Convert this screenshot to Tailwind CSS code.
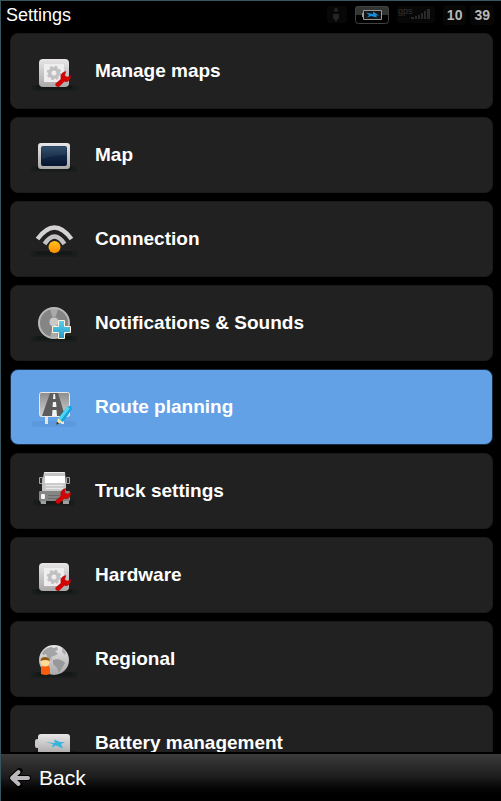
<!DOCTYPE html>
<html lang="en">
	<head>
		<meta charset="UTF-8" />
		<meta name="viewport" content="width=device-width, initial-scale=1.0" />
		<script src="https://cdn.jsdelivr.net/npm/@tailwindcss/browser@4"></script>
		<title>Settings</title>
	</head>
	<body class="bg-black">
		<!-- shared gradients and icon parts -->
		<svg class="absolute w-0 h-0" aria-hidden="true">
			<defs>
				<linearGradient id="silver" x1="0" y1="0" x2="0" y2="1"><stop offset="0" stop-color="#e8e6e6" /><stop offset="1" stop-color="#aaa8a8" /></linearGradient>
				<linearGradient id="navy" x1="0" y1="0" x2="0" y2="1"><stop offset="0" stop-color="#294766" /><stop offset=".45" stop-color="#132a47" /><stop offset="1" stop-color="#061530" /></linearGradient>
				<linearGradient id="orange" x1="0" y1="0" x2="0" y2="1"><stop offset="0" stop-color="#ffc31c" /><stop offset="1" stop-color="#ff8c00" /></linearGradient>
				<linearGradient id="cyan" x1="0" y1="0" x2="0" y2="1"><stop offset="0" stop-color="#5fd0ee" /><stop offset="1" stop-color="#2399c4" /></linearGradient>
				<linearGradient id="sign" x1="0" y1="0" x2="0" y2="1"><stop offset="0" stop-color="#8d8d8d" /><stop offset="1" stop-color="#d2d2d2" /></linearGradient>
				<symbol id="shadow" viewBox="0 0 46 8"><rect x="0" y="1" width="46" height="6" rx="3" fill="#191d1b" /><rect x="5" y="1" width="36" height="4" rx="2" fill="#141816" /></symbol>
				<symbol id="wrench" viewBox="0 0 16 16">
					<path d="M.8 12.600 6 8C5 4 7 1 11 .6L9.600 4.200l2.400 2L15.600 4.600c.5 4-2.600 6.800-6.400 6L4.200 15.400c-2 1.200-4.400-.8-3.400-2.800z" fill="#d40404" stroke="#9a0202" stroke-width=".4" />
				</symbol>
				<symbol id="plate" viewBox="0 0 70 76">
					<use href="#shadow" x="11" y="51" width="46" height="8" />
					<rect x="19" y="26" width="30" height="28" rx="4" fill="url(#silver)" />
					<rect x="24" y="31" width="20" height="18" fill="#eeeeef" />
					<circle cx="34" cy="40" r="4.2" fill="none" stroke="#c1c1c3" stroke-width="3.4" />
					<circle cx="34" cy="40" r="6.2" fill="none" stroke="#c1c1c3" stroke-width="2" stroke-dasharray="2.6 2.27" />
					<use href="#wrench" x="35" y="38" width="16" height="16" />
				</symbol>
			</defs>
		</svg>

		<div class="h-screen flex flex-col overflow-hidden border-t border-l border-[#39555d] font-['Liberation_Sans',Arial,sans-serif] text-white">
			<header class="h-8 shrink-0 flex items-center justify-between pl-[5px] pr-[7px] pb-1">
				<h1 class="text-[18px] leading-7">Settings</h1>
				<div class="flex items-center gap-2 text-sm font-bold text-[#b8b8b8]">
					<svg class="w-5 h-5" viewBox="0 0 20 20" aria-label="Person">
						<rect x="0" y="1" width="20" height="17" rx="3" fill="#070707" />
						<circle cx="9" cy="5" r="2" fill="#242424" /><path d="M6 9h6v4l-3 4-3-4z" fill="#242424" />
					</svg>
					<svg class="w-[34px] h-5" viewBox="0 0 34 20" aria-label="Charging">
						<path d="M0 10V4q0-3 3-3h28q3 0 3 3v6z" fill="#343634" />
						<rect x=".5" y="1.5" width="33" height="17" rx="3" fill="none" stroke="#40423f" />
						<path d="M8.5 5.5h18v9h-18zM7.5 8v4" fill="#151515" stroke="#999" />
						<path d="M11 7.500l7 1.500V6.500l6 4h-3l1 2-6-1.500-4 1.500 2-2.500z" fill="#168bdc" />
					</svg>
					<svg class="w-[38px] h-5" viewBox="0 0 38 20" aria-label="GPS signal">
						<rect x="0" y="1" width="38" height="17" rx="3" fill="#070707" />
						<text x="1" y="9" font-size="9" font-weight="400" fill="#333">gps</text>
						<path d="M14 12h3v2h-3zM18 11h2v3h-2zM21 10h2v4h-2zM24 8h2v6h-2zM27 6h2v8h-2zM30 4h3v10h-3z" fill="#292929" />
					</svg>
					<time class="flex gap-1"><span class="px-1 rounded bg-[#070707]">10</span><span class="px-1 rounded bg-[#070707]">39</span></time>
				</div>
			</header>

			<main class="flex-1 min-h-0 overflow-hidden pl-[9px] pr-2">
				<ul class="flex flex-col gap-2">
					<li>
						<button class="w-full h-[76px] flex items-center gap-[5px] pl-[9px] rounded-lg border border-[#1b1b1b] bg-[#212121] text-left text-[19px] font-bold">
							<svg class="w-[70px] h-[76px] shrink-0" viewBox="0 0 70 76"><use href="#plate" width="70" height="76" /></svg>
							<span>Manage maps</span>
						</button>
					</li>
					<li>
						<button class="w-full h-[76px] flex items-center gap-[5px] pl-[9px] rounded-lg border border-[#1b1b1b] bg-[#212121] text-left text-[19px] font-bold">
							<svg class="w-[70px] h-[76px] shrink-0" viewBox="0 0 70 76">
								<use href="#shadow" x="11" y="48" width="46" height="8" />
								<rect x="18" y="26" width="32" height="26" rx="3" fill="url(#silver)" />
								<rect x="21" y="29" width="26" height="20" rx="2" fill="url(#navy)" />
								<path d="M22 30h24v8q-12 0-24 4z" fill="#fff" opacity=".06" />
							</svg>
							<span>Map</span>
						</button>
					</li>
					<li>
						<button class="w-full h-[76px] flex items-center gap-[5px] pl-[9px] rounded-lg border border-[#1b1b1b] bg-[#212121] text-left text-[19px] font-bold">
							<svg class="w-[70px] h-[76px] shrink-0" viewBox="0 0 70 76">
								<use href="#shadow" x="11" y="49" width="46" height="8" />
								<path d="M17.500 38Q34.500 15 51.500 38" fill="none" stroke="#d4d2d3" stroke-width="4.500" />
								<path d="M24.500 43Q34.500 28 44.500 43" fill="none" stroke="#c4c2c3" stroke-width="4.500" />
								<circle cx="34.5" cy="46" r="6" fill="url(#orange)" stroke="#212121" stroke-width="2" paint-order="stroke" />
							</svg>
							<span>Connection</span>
						</button>
					</li>
					<li>
						<button class="w-full h-[76px] flex items-center gap-[5px] pl-[9px] rounded-lg border border-[#1b1b1b] bg-[#212121] text-left text-[19px] font-bold">
							<svg class="w-[70px] h-[76px] shrink-0" viewBox="0 0 70 76">
								<use href="#shadow" x="11" y="50" width="46" height="8" />
								<circle cx="34" cy="38" r="15" fill="#858585" stroke="#b9b9b9" stroke-width="2" />
								<path d="M34 38 30 24h8zM34 38l-4 14h8z" fill="#aaa" />
								<circle cx="34" cy="37" r="5" fill="#c9c9c9" stroke="#8a8a8a" />
								<path d="M38.500 35.500h6v6h6v6h-6v6h-6v-6h-6v-6h6z" fill="url(#cyan)" stroke="#fff4dc" />
							</svg>
							<span>Notifications &amp; Sounds</span>
						</button>
					</li>
					<li>
						<button aria-current="true" class="w-full h-[76px] flex items-center gap-[5px] pl-[9px] rounded-lg border border-[#182c43] bg-[#63a1e7] text-left text-[19px] font-bold">
							<svg class="w-[70px] h-[76px] shrink-0" viewBox="0 0 70 76">
								<rect x="12" y="52" width="44" height="6" rx="3" fill="#5b98dc" />
								<path d="M25 46h3v9h-3zM41 46h3v9h-3z" fill="#e4e4e4" />
								<rect x="19.500" y="23.500" width="30" height="24" rx="2" fill="url(#sign)" stroke="#e8e8e8" />
								<path d="M30 24h8l7 23H22z" fill="#5c5c5c" />
								<path d="M33.500 25h1.500l.5 5h-2.500zM33 33h3l.5 5h-4zM32.500 41h4l.5 6h-5z" fill="#f4f4f4" />
								<path d="m38 50 9-12 4-1.500 1 3.500-9 13z" fill="#12a5dd" /><path d="m39.500 50.500 9-12" stroke="#4fd2f5" stroke-width="3" />
								<path d="m38 49-1.500 6.500 6-2.500z" fill="#f8e3a4" /><path d="m37 52.500-.8 3.300 3-1z" fill="#333" />
							</svg>
							<span>Route planning</span>
						</button>
					</li>
					<li>
						<button class="w-full h-[76px] flex items-center gap-[5px] pl-[9px] rounded-lg border border-[#1b1b1b] bg-[#212121] text-left text-[19px] font-bold">
							<svg class="w-[70px] h-[76px] shrink-0" viewBox="0 0 70 76">
								<use href="#shadow" x="13" y="46" width="42" height="8" />
								<path d="M20 47h6v4h-5zM43 47h6v4h-6z" fill="#a0a0a0" />
								<path d="M19.500 24.500h3v6h-3zM46.500 24.500h3v6h-3z" fill="#333" stroke="#a5a5a5" />
								<path d="M24 19h21l1 12v9H22v-9z" fill="#c4c4c4" />
								<path d="M24.500 19.500h20" stroke="#eee" />
								<path d="M25 23h20v7H25z" fill="#fff" />
								<path d="M25 30h19v9H25z" fill="#ccc" /><path d="M26 32.500h17M26 35.500h17" stroke="#e8e8e8" />
								<rect x="19" y="38" width="31" height="10" rx="1" fill="#858585" />
								<rect x="21" y="41" width="4" height="5" rx="1" fill="#f6f6f6" />
								<path d="M28 42.500h12M28 45.500h10" stroke="#6c6c6c" />
								<use href="#wrench" x="35" y="35" width="16" height="16" />
							</svg>
							<span>Truck settings</span>
						</button>
					</li>
					<li>
						<button class="w-full h-[76px] flex items-center gap-[5px] pl-[9px] rounded-lg border border-[#1b1b1b] bg-[#212121] text-left text-[19px] font-bold">
							<svg class="w-[70px] h-[76px] shrink-0" viewBox="0 0 70 76"><use href="#plate" width="70" height="76" /></svg>
							<span>Hardware</span>
						</button>
					</li>
					<li>
						<button class="w-full h-[76px] flex items-center gap-[5px] pl-[9px] rounded-lg border border-[#1b1b1b] bg-[#212121] text-left text-[19px] font-bold">
							<svg class="w-[70px] h-[76px] shrink-0" viewBox="0 0 70 76">
								<use href="#shadow" x="11" y="50" width="46" height="8" />
								<circle cx="34" cy="39" r="15" fill="url(#silver)" />
								<path d="M22 32q3-5 9-6l3 1 3-1 1 3-3 1 3 3-4 2-3 1 1 3-4-2-2-4-3 1z" fill="#a2a4a5" />
								<path d="m33 39 5-1 5 2 2 2-3 5-3 5-2-5-4-4z" fill="#96989a" />
								<path d="m42 27 4 4-1 3-3-3z" fill="#acaeaf" />
								<path d="M21 53v-5q0-4 4.500-4t4.500 4v5q-4.500 2-9 0z" fill="#fa5d0b" />
								<circle cx="25" cy="41" r="4.500" fill="#ffd995" /><path d="M20.500 40q0-4 4.500-4t5 4q-5-2-9.500 0z" fill="#8a5a16" />
							</svg>
							<span>Regional</span>
						</button>
					</li>
					<li>
						<button class="w-full h-[76px] flex items-center gap-[5px] pl-[9px] rounded-lg border border-[#1b1b1b] bg-[#212121] text-left text-[19px] font-bold">
							<svg class="w-[70px] h-[76px] shrink-0" viewBox="0 0 70 76">
								<use href="#shadow" x="11" y="45" width="50" height="8" />
								<rect x="15" y="34" width="6" height="9" rx="2" fill="#c8c8c8" />
								<rect x="18" y="29" width="32" height="20" rx="3" fill="url(#silver)" />
								<path d="m25 37 10 1-1-3.500 6 2.500h5l-4 2 2 4.500-7-3-4 2 1-3.500z" fill="#36b5df" />
							</svg>
							<span>Battery management</span>
						</button>
					</li>
				</ul>
			</main>

			<footer class="h-[49px] shrink-0 border-t-2 border-black bg-linear-to-b from-[#3b3b3b] via-[#1c1c1c] to-black">
				<button class="h-full flex items-center gap-2 pl-2 text-[21px]">
					<svg class="w-[22px] h-5" viewBox="0 0 22 20">
						<path d="M10.500 3 3 10l7.500 7M4 10h15" fill="none" stroke="#000" stroke-width="6" stroke-linecap="round" stroke-linejoin="round" />
						<path d="M9.500 4 3 10l6.500 6M4 10h15" fill="none" stroke="#bab8ba" stroke-width="4" stroke-linecap="round" stroke-linejoin="round" />
					</svg>
					<span>Back</span>
				</button>
			</footer>
		</div>
	</body>
</html>
